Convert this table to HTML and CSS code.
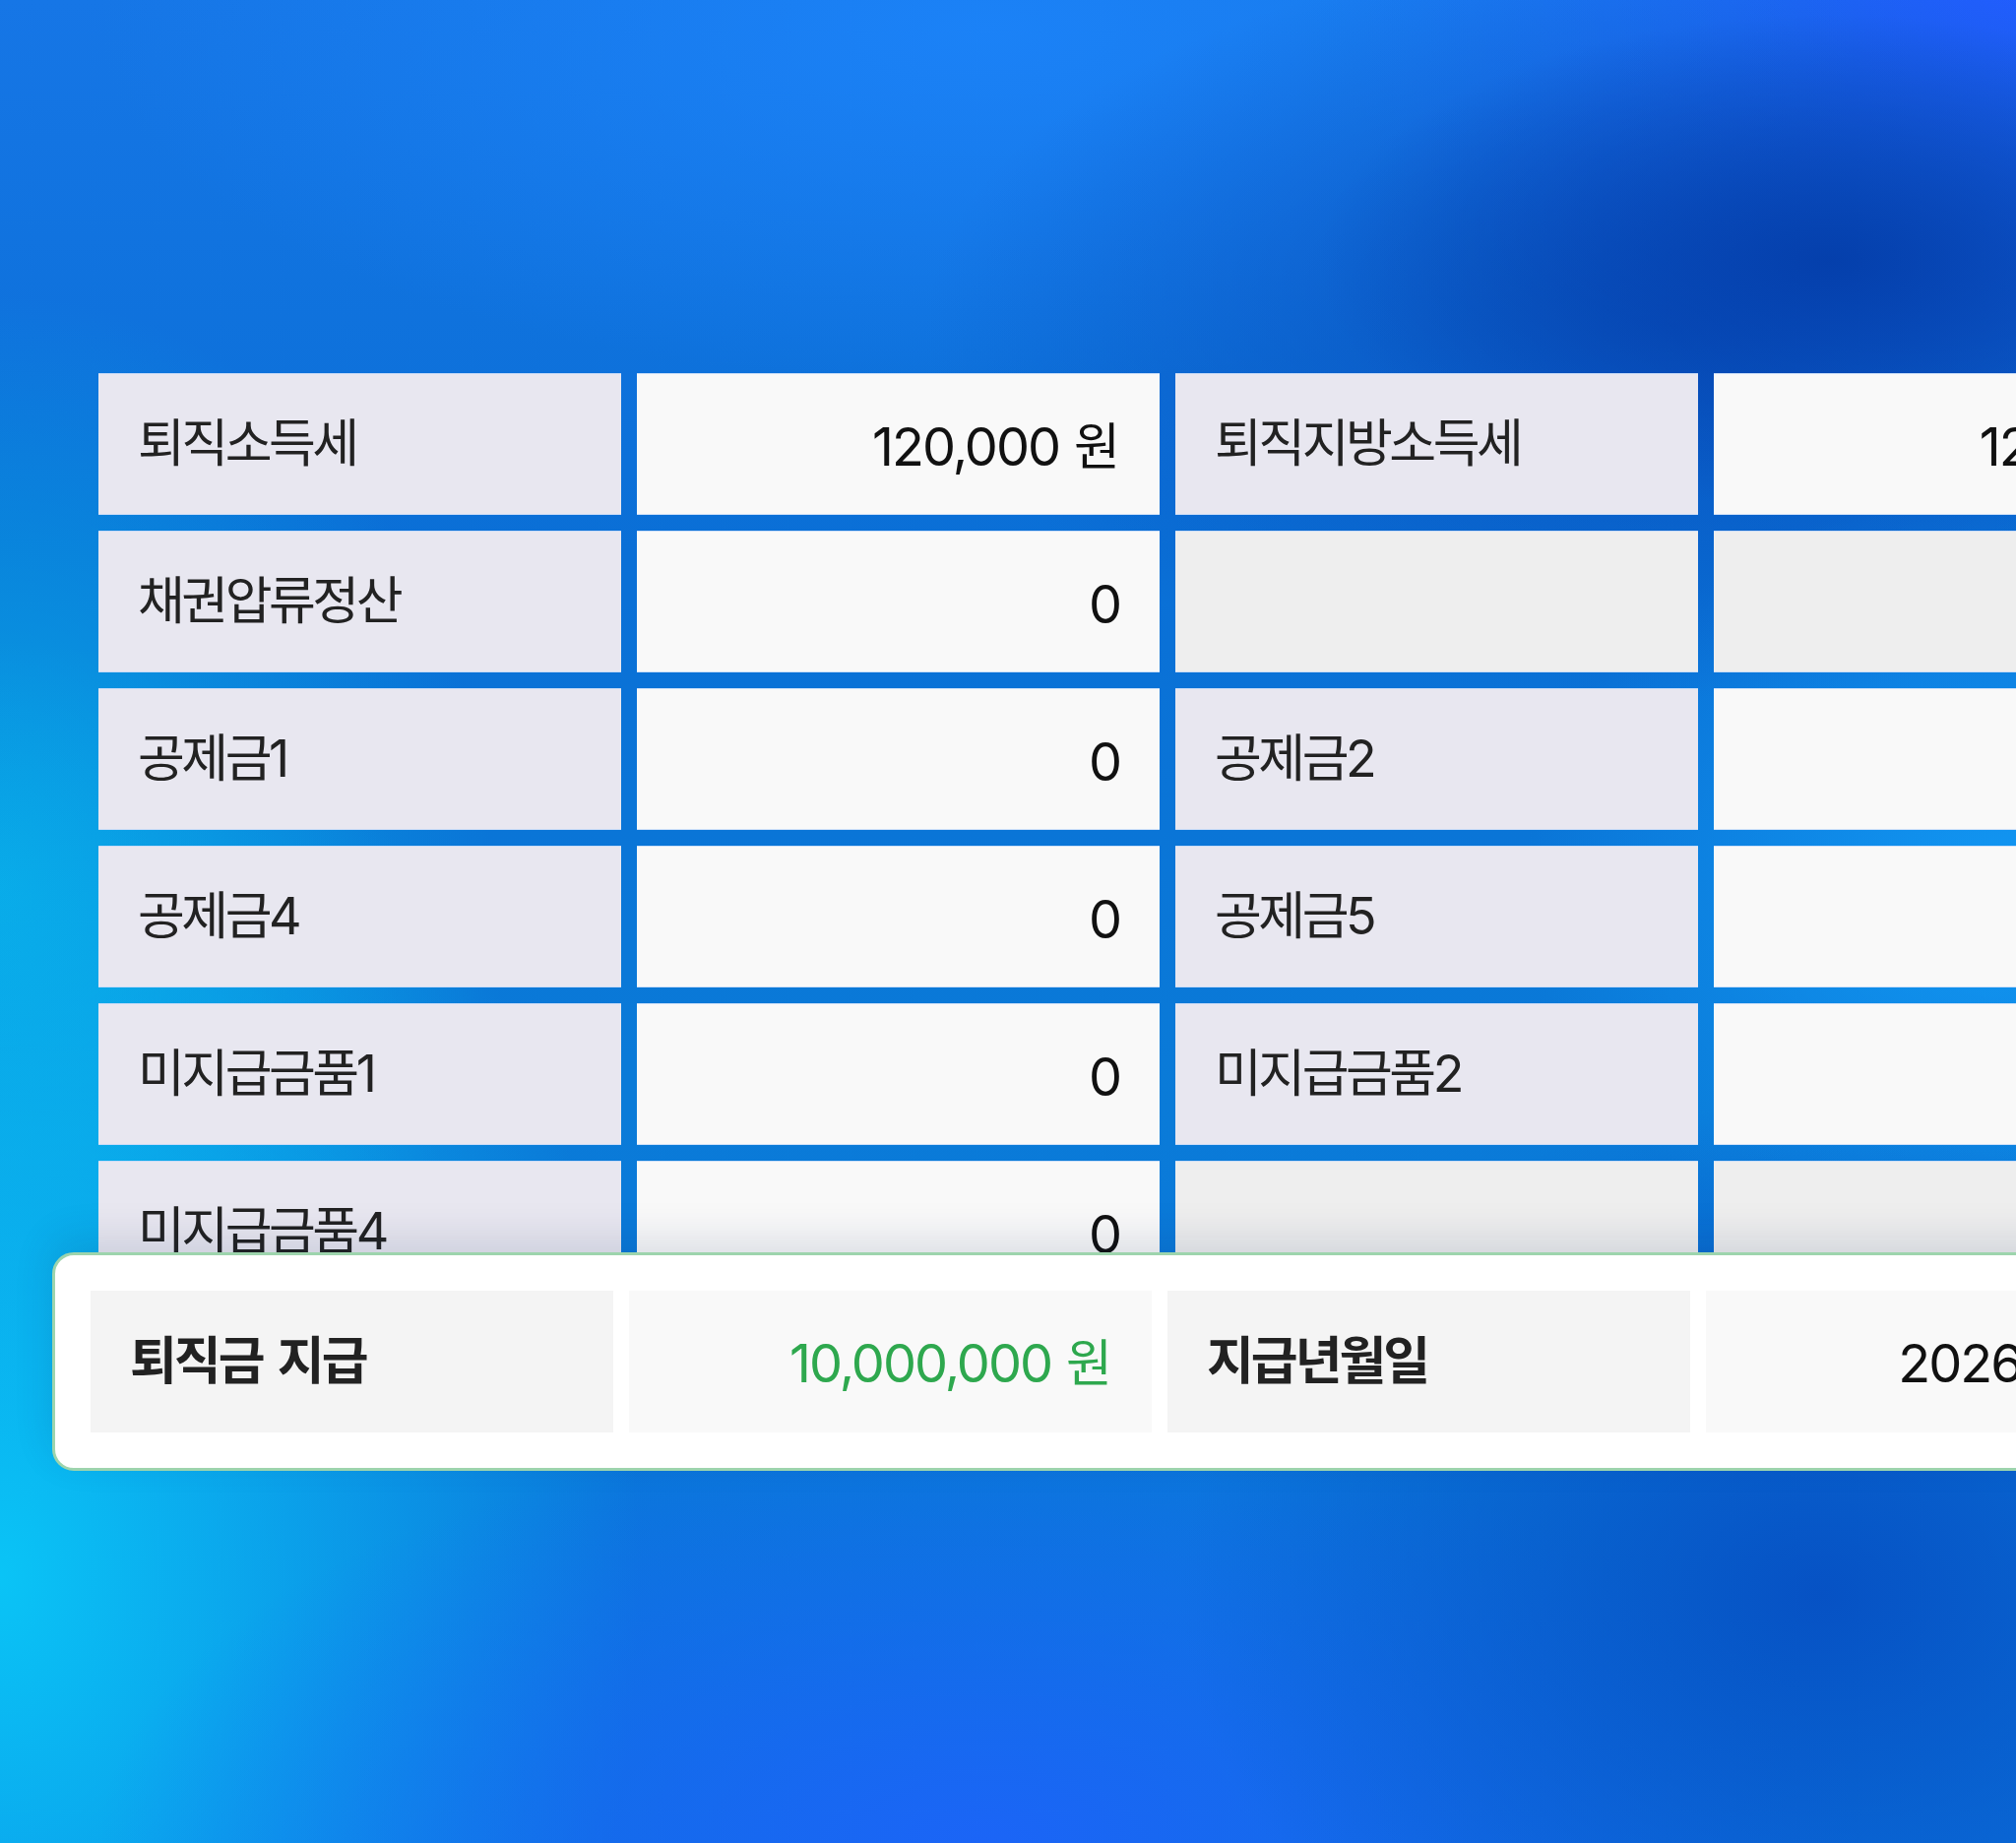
FILE: index.html
```html
<!DOCTYPE html>
<html lang="ko">
<head>
<meta charset="utf-8">
<title>퇴직금 정산</title>
<link rel="stylesheet" href="styles.css">
</head>
<body>
<div class="sheet">
  <div class="grid">
    <div class="cell label">퇴직소득세</div>
    <div class="cell value">120,000<span class="unit">원</span></div>
    <div class="cell label">퇴직지방소득세</div>
    <div class="cell value">12,000<span class="unit">원</span></div>

    <div class="cell label">채권압류정산</div>
    <div class="cell value">0</div>
    <div class="cell empty"></div>
    <div class="cell empty"></div>

    <div class="cell label">공제금1</div>
    <div class="cell value">0</div>
    <div class="cell label">공제금2</div>
    <div class="cell value">0</div>

    <div class="cell label">공제금4</div>
    <div class="cell value">0</div>
    <div class="cell label">공제금5</div>
    <div class="cell value">0</div>

    <div class="cell label">미지급금품1</div>
    <div class="cell value">0</div>
    <div class="cell label">미지급금품2</div>
    <div class="cell value">0</div>

    <div class="cell label">미지급금품4</div>
    <div class="cell value">0</div>
    <div class="cell empty"></div>
    <div class="cell empty"></div>
  </div>

  <div class="summary">
    <div class="cell slabel">퇴직금 지급</div>
    <div class="cell svalue green">10,000,000<span class="unit">원</span></div>
    <div class="cell slabel">지급년월일</div>
    <div class="cell svalue">2026-03-20</div>
  </div>
</div>
</body>
</html>
```

FILE: styles.css
```css
html, body {
  margin: 0;
  padding: 0;
}

body {
  width: 2048px;
  height: 1872px;
  overflow: hidden;
  font-family: "Inter", "Noto Sans CJK KR", sans-serif;
  background-color: #0b74dc;
  background-image:
    radial-gradient(ellipse 520px 250px at 1860px 265px, rgba(4, 62, 170, 0.95), rgba(4, 62, 170, 0) 100%),
    radial-gradient(ellipse 760px 380px at 1700px 330px, rgba(6, 70, 180, 0.7), rgba(6, 70, 180, 0) 100%),
    radial-gradient(ellipse 900px 360px at 1000px 30px, rgba(28, 132, 250, 0.85), rgba(28, 132, 250, 0) 100%),
    radial-gradient(ellipse 700px 420px at 2048px 0px, rgba(34, 92, 255, 0.95), rgba(34, 92, 255, 0) 100%),
    radial-gradient(ellipse 650px 500px at 1850px 1620px, rgba(6, 80, 195, 0.95), rgba(6, 80, 195, 0) 100%),
    radial-gradient(ellipse 900px 420px at 1000px 1872px, rgba(28, 100, 248, 0.95), rgba(28, 100, 248, 0) 100%),
    radial-gradient(ellipse 650px 950px at 0px 1600px, rgba(10, 196, 246, 1), rgba(10, 196, 246, 0) 100%),
    radial-gradient(ellipse 500px 600px at 0px 900px, rgba(8, 168, 230, 0.9), rgba(8, 168, 230, 0) 100%),
    radial-gradient(ellipse 500px 400px at 2048px 900px, rgba(20, 160, 250, 0.8), rgba(20, 160, 250, 0) 100%),
    linear-gradient(180deg, #1676e6 0%, #0a6fd6 30%, #0a7bd8 60%, #0b72de 100%);
}

.sheet {
  padding: 379px 0 0 53px;
  width: max-content;
}

.grid {
  margin-left: 47px;
  display: grid;
  grid-template-columns: repeat(4, 531px);
  grid-auto-rows: 144px;
  gap: 16px;
}

.cell {
  display: flex;
  align-items: center;
  padding: 0 40px;
  box-sizing: border-box;
  line-height: 1;
  white-space: nowrap;
}

.grid .cell {
  border-top: 1px solid rgba(190, 215, 250, 0.7);
  border-bottom: 1px solid rgba(190, 215, 250, 0.7);
}

.label {
  background: #e8e7f0;
  color: #222222;
  font-size: 52px;
  letter-spacing: -3.5px;
}

.value {
  background: #f9f9f9;
  color: #111111;
  justify-content: flex-end;
  padding-top: 5px;
  font-size: 54px;
  letter-spacing: -2px;
}

.empty {
  background: #eeeeee;
}

.unit {
  font-size: 51px;
  margin-left: 15px;
  letter-spacing: 0;
}

.summary {
  position: relative;
  margin-top: -51px;
  width: max-content;
  display: grid;
  grid-template-columns: repeat(4, 531px);
  grid-auto-rows: 144px;
  gap: 16px;
  padding: 36px;
  background: #ffffff;
  border: 3px solid #9dd4ad;
  border-radius: 22px;
  box-shadow: 0 -14px 40px rgba(0, 30, 80, 0.12);
}

.slabel {
  background: #f4f4f4;
  color: #222222;
  font-size: 52px;
  font-weight: 700;
  letter-spacing: -3px;
  word-spacing: 6px;
}

.svalue {
  background: #f9f9f9;
  color: #111111;
  justify-content: flex-end;
  padding-top: 3px;
  font-size: 54px;
  letter-spacing: -2px;
}

.green {
  color: #2ea84e;
}
```
